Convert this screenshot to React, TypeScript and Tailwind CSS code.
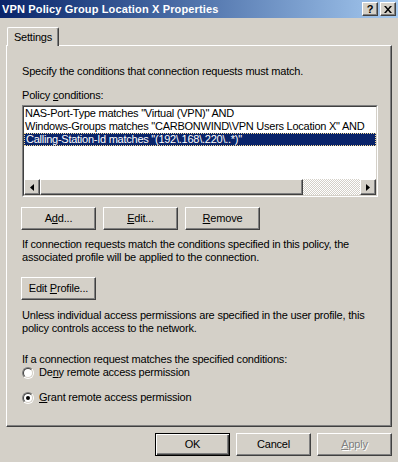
import React from 'react';

const raised =
  'border border-t-white border-l-white border-r-[#404040] border-b-[#404040] shadow-[inset_-1px_-1px_0_#808080]';

const Btn: React.FC<{ children: React.ReactNode; className?: string; isDefault?: boolean; disabled?: boolean }> = ({
  children,
  className = '',
  isDefault,
  disabled,
}) => (
  <div
    className={
      'w-[75px] h-[23px] bg-[#d4d0c8] flex items-center justify-center ' +
      (isDefault
        ? 'border border-black shadow-[inset_1px_1px_0_#fff,inset_-1px_-1px_0_#404040,inset_-2px_-2px_0_#808080] '
        : raised + ' ') +
      (disabled ? 'text-[#808080] [text-shadow:1px_1px_0_#fff] ' : 'text-black ') +
      className
    }
  >
    <span className="whitespace-pre">{children}</span>
  </div>
);

const U: React.FC<{ children: React.ReactNode }> = ({ children }) => <span className="underline underline-offset-[1px]">{children}</span>;

const Radio: React.FC<{ checked?: boolean; children: React.ReactNode }> = ({ checked, children }) => (
  <div className="flex items-center h-[13px]">
    <div className="w-[12px] h-[12px] rounded-full border border-t-[#808080] border-l-[#808080] border-b-white border-r-white">
      <div className="w-[10px] h-[10px] rounded-full border border-t-[#404040] border-l-[#404040] border-b-[#d4d0c8] border-r-[#d4d0c8] bg-white flex items-center justify-center">
        {checked && <div className="w-[4px] h-[4px] rounded-full bg-black" />}
      </div>
    </div>
    <span className="ml-[5px]">{children}</span>
  </div>
);

const rows = [
  'NAS-Port-Type matches "Virtual (VPN)" AND',
  'Windows-Groups matches "CARBONWIND\\VPN Users Location X" AND',
  'Calling-Station-Id matches "(192\\.168\\.220\\..*)"',
];

export default function App() {
  return (
    <div
      className="w-[398px] h-[462px] bg-[#d4d0c8] flex flex-col overflow-hidden text-[11px] leading-[13px] text-black tracking-[-0.2px]"
      style={{ fontFamily: '"Liberation Sans", Arial, sans-serif' }}
    >
      {/* title bar */}
      <div className="h-[18px] bg-linear-to-r from-[#0a246a] to-[#a6caf0] flex items-center justify-between pl-[2px] pr-[2px] tracking-[0.15px]">
        <span className="text-white font-bold text-[11px]">VPN Policy Group Location X Properties</span>
        <div className="flex gap-[2px] tracking-normal">
          <div className={'w-[16px] h-[14px] bg-[#d4d0c8] flex items-center justify-center font-bold text-[11px] leading-none ' + raised}>
            ?
          </div>
          <div className={'w-[16px] h-[14px] bg-[#d4d0c8] flex items-center justify-center ' + raised}>
            <svg width="8" height="7" viewBox="0 0 8 7">
              <path d="M0 0h2l2 2.5L6 0h2L5 3.5 8 7H6L4 4.5 2 7H0l3-3.5z" fill="#000" />
            </svg>
          </div>
        </div>
      </div>

      {/* tabs */}
      <div className="mt-[9px] pl-[7px] flex relative z-10">
        <div className="w-[52px] h-[19px] bg-[#d4d0c8] border-t border-l border-r border-t-white border-l-white border-r-[#404040] rounded-tl-[2px] rounded-tr-[2px] shadow-[inset_-1px_0_0_#808080] flex items-center justify-center -mb-[1px]">
          Settings
        </div>
      </div>

      {/* tab panel */}
      <div className="ml-[6px] w-[386px] h-[382px] border border-t-white border-l-white border-r-[#404040] border-b-[#404040] shadow-[inset_-1px_-1px_0_#808080] pl-[15px] pt-[19px] flex flex-col">
        <p>Specify the conditions that connection requests must match.</p>
        <p className="mt-[11px]">
          Policy <U>c</U>onditions:
        </p>

        {/* list box */}
        <div className="mt-[3px] w-[356px] h-[92px] border border-t-[#808080] border-l-[#808080] border-b-white border-r-white">
          <div className="w-full h-full border border-t-[#404040] border-l-[#404040] border-b-[#d4d0c8] border-r-[#d4d0c8] bg-white flex flex-col">
            <div className="flex-1 overflow-hidden tracking-[-0.25px]">
              {rows.map((r, i) => (
                <div
                  key={i}
                  className={
                    'h-[13px] pl-[1px] whitespace-nowrap ' +
                    (i === 2 ? 'bg-[#0a246a] text-white border border-dotted border-[#f5db95] leading-[11px] w-[352px]' : '')
                  }
                >
                  {r}
                </div>
              ))}
            </div>
            {/* horizontal scrollbar */}
            <div className="h-[16px] flex bg-[repeating-conic-gradient(#fff_0_25%,#d4d0c8_0_50%)] bg-[length:2px_2px]">
              <div className={'w-[16px] h-[16px] bg-[#d4d0c8] flex items-center justify-center ' + raised}>
                <svg width="4" height="7" viewBox="0 0 4 7">
                  <path d="M4 0v7L0 3.5z" fill="#000" />
                </svg>
              </div>
              <div className={'w-[263px] h-[16px] bg-[#d4d0c8] ' + raised} />
              <div className="flex-1" />
              <div className={'w-[16px] h-[16px] bg-[#d4d0c8] flex items-center justify-center ' + raised}>
                <svg width="4" height="7" viewBox="0 0 4 7">
                  <path d="M0 0v7L4 3.5z" fill="#000" />
                </svg>
              </div>
            </div>
          </div>
        </div>

        <div className="mt-[10px] flex gap-[7px] -ml-[1px]">
          <Btn>
            A<U>d</U>d...
          </Btn>
          <Btn>
            <U>E</U>dit...
          </Btn>
          <Btn>
            <U>R</U>emove
          </Btn>
        </div>

        <p className="mt-[8px]">
          If connection requests match the conditions specified in this policy, the
          <br />
          associated profile will be applied to the connection.
        </p>

        <div className="mt-[13px] -ml-[1px]">
          <Btn>
            Edit <U>P</U>rofile...
          </Btn>
        </div>

        <p className="mt-[9px]">
          Unless individual access permissions are specified in the user profile, this
          <br />
          policy controls access to the network.
        </p>

        <p className="mt-[18px]">If a connection request matches the specified conditions:</p>
        <div className="mt-[0px]">
          <Radio>
            De<U>n</U>y remote access permission
          </Radio>
        </div>
        <div className="mt-[12px]">
          <Radio checked>
            <U>G</U>rant remote access permission
          </Radio>
        </div>
      </div>

      {/* dialog buttons */}
      <div className="mt-[6px] pr-[6px] flex justify-end gap-[6px]">
        <Btn isDefault>OK</Btn>
        <Btn>Cancel</Btn>
        <Btn disabled>
          <U>A</U>pply
        </Btn>
      </div>
    </div>
  );
}
